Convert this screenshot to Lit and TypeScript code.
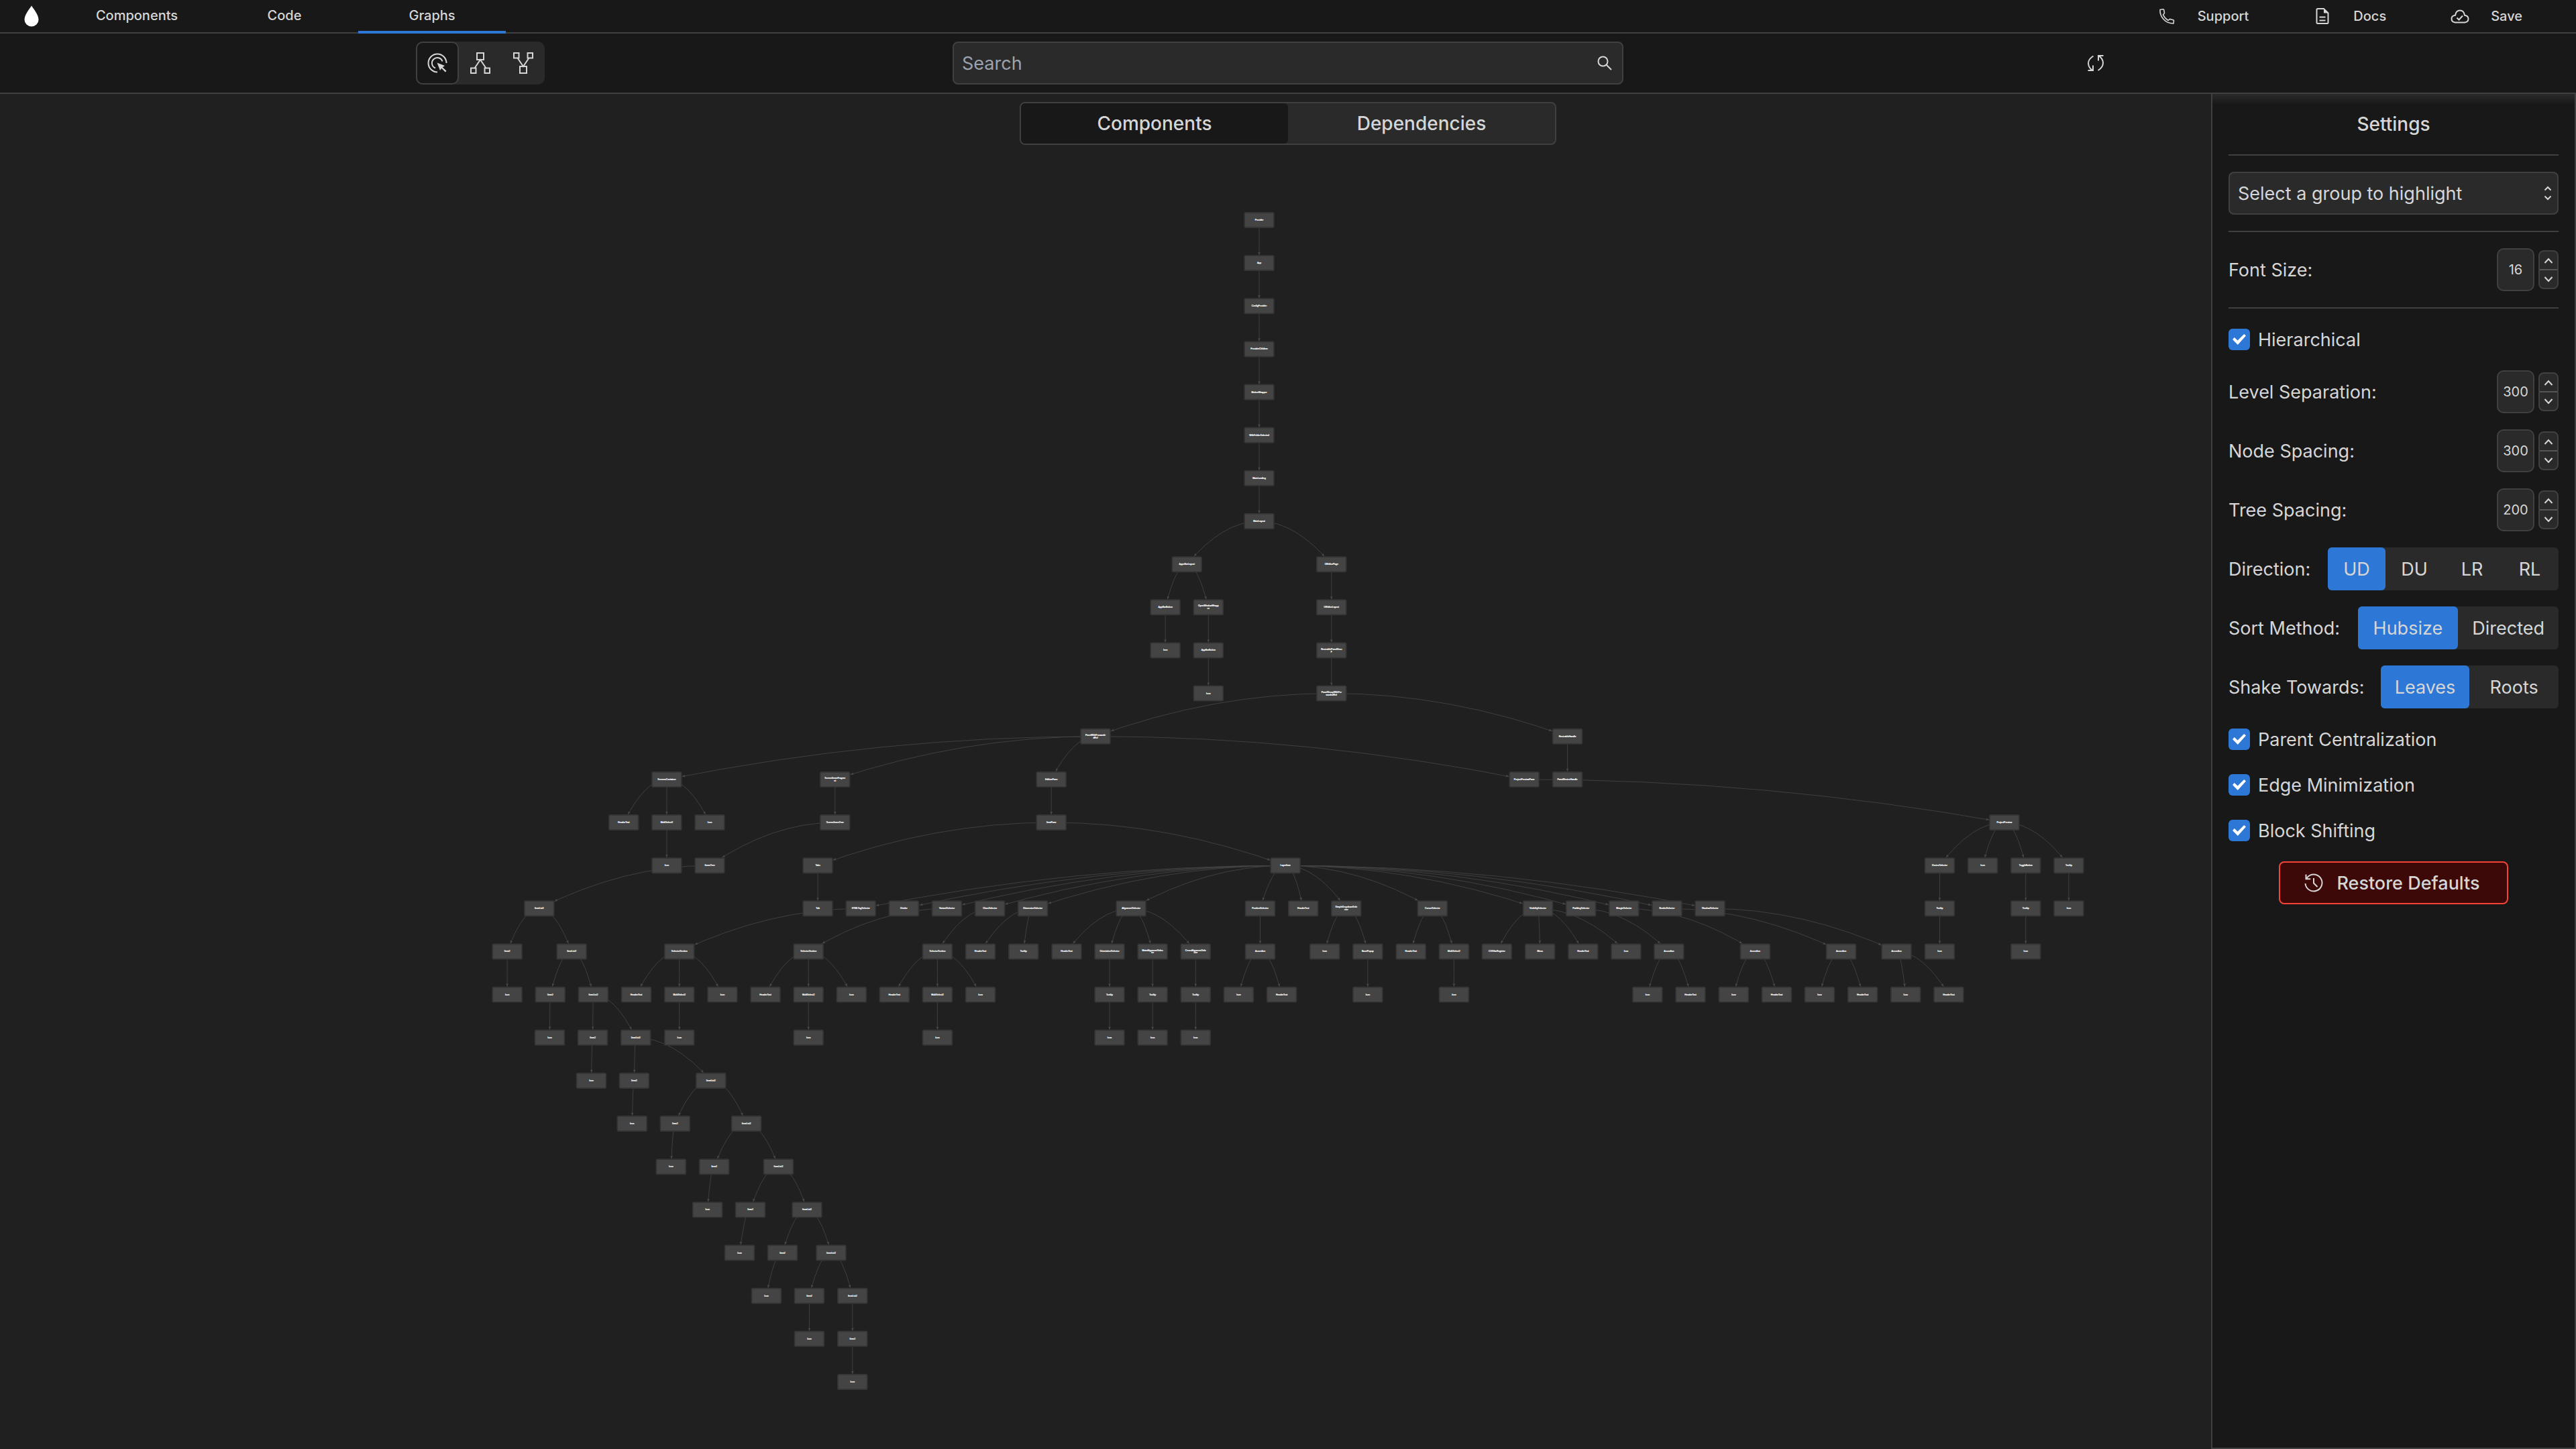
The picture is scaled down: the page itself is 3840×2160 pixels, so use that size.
import { LitElement, html, svg, css } from "lit";
import { customElement, property, state } from "lit/decorators.js";
import { classMap } from "lit/directives/class-map.js";

/* ---------- graph data ---------- */

interface Leaf {
  label: string;
  x: number;
  kids: Leaf[];
}

const n = (label: string, x: number, ...kids: Leaf[]): Leaf => ({ label, x, kids });
const icon = (x: number) => n("Icon", x);
const header = (x: number) => n("HeaderText", x);
const accordion = (x: number, first: number) => n("Accordion", x, icon(first), header(first + 300));
const multi = (x: number) => n("MultiSelect2", x, icon(x));
const section = (x: number) => n("SelectorSection", x, header(x - 300), multi(x), icon(x + 300));
const item = (x: number, child: number) => n("Item2", x, icon(child));
const list = (x: number, ...kids: Leaf[]) => n("ItemList2", x, ...kids);

const itemLists = list(-5019,
  item(-5242, -5242),
  list(-4793,
    item(-4942, -4946),
    list(-4642,
      item(-4646, -4656),
      list(-4346,
        item(-4357, -4372),
        list(-3822,
          item(-4072, -4100),
          list(-3575,
            item(-3799, -3846),
            list(-3351,
              item(-3547, -3622),
              list(-3152,
                item(-3323, -3435),
                list(-2984,
                  item(-3136, -3136),
                  list(-2835, item(-2835, -2835)))))))))));

const layerItem = n("LayerItem", 183,
  n("HTMLTagSelector", -2777, section(-4042)),
  n("Divider", -2477),
  n("VariantSelector", -2177, section(-3142)),
  n("ClassSelector", -1877, section(-2243)),
  n("DimensionSelector", -1578, header(-1943), n("Tooltip", -1643)),
  n("AlignmentSelector", -893,
    header(-1342),
    n("OrientationSelector", -1043, n("Tooltip", -1043, icon(-1043))),
    n("MainAlignmentSelec|tor", -743, n("Tooltip", -743, icon(-743))),
    n("CrossAlignmentSele|ctor", -443, n("Tooltip", -443, icon(-443)))),
  n("PositionSelector", 7, accordion(7, -143)),
  header(307),
  n("SimpleDropdownSele|ctor", 607, icon(457), n("BasePopup", 757, icon(757))),
  n("CursorSelector", 1208, header(1058), multi(1358)),
  n("VisibilitySelector", 1943, n("CSSVarRegister", 1657), n("Menu", 1958), header(2258), icon(2558)),
  n("PaddingSelector", 2243, accordion(2857, 2707)),
  n("MarginSelector", 2543, accordion(3458, 3308)),
  n("BorderSelector", 2843, accordion(4057, 3907)),
  n("ShadowSelector", 3143, accordion(4443, 4507)));

const panel = n("PanelWithForwarde|dRef", -1141,
  n("ScreensContainer", -4130, header(-4430), multi(-4130), icon(-3830)),
  n("ScreenItemsFragme|nt", -2957, n("ScreenItemsTree", -2957, n("ItemsTree", -3830, itemLists))),
  n("EditionPane", -1449, n("ItemPane", -1449, n("Tabs", -3077, n("Tab", -3077)), layerItem)),
  n("ProjectPreviewPane", 1848,
    n("ProjectPreview", 5195,
      n("DeviceSelector", 4744, n("Tooltip", 4744, icon(4744))),
      icon(5044),
      n("ToggleButton", 5344, n("Tooltip", 5344, icon(5344))),
      n("Tooltip", 5644, icon(5644)))));

const layout = n("MainLayout", 0,
  n("AppsBarLayout", -504,
    n("AppBarButton", -654, icon(-654)),
    n("OpenWindowWrapp|er", -354, n("AppBarButton", -354, icon(-354)))),
  n("UIEditorPage", 504,
    n("UIEditorLayout", 504,
      n("ResizablePanelGrou|p", 504,
        n("PanelGroupWithFor|wardedRef", 504,
          panel,
          n("ResizableHandle", 2149, n("PanelResizeHandle", 2149)))))));

const root = ["MainLanding", "WithFolderSelected", "MotionWrapper", "ProviderChildren", "ConfigProvider", "App", "Provider"]
  .reduce((child, label) => n(label, 0, child), layout);

const LEVEL = 300;
const BOX_W = 205;
const BOX_H = 104;

interface Pt { x: number; y: number }
interface Edge { line: string; head: string }
interface Box { x: number; y: number; lines: string[] }

function makeEdge(a: Pt, b: Pt): Edge {
  const v = { x: (a.x + b.x) / 2, y: a.x === b.x ? (a.y + b.y) / 2 : a.y };
  const at = (t: number): Pt => ({
    x: (1 - t) ** 2 * a.x + 2 * t * (1 - t) * v.x + t * t * b.x,
    y: (1 - t) ** 2 * a.y + 2 * t * (1 - t) * v.y + t * t * b.y,
  });
  const halfW = BOX_W / 2 + 4;
  const halfH = BOX_H / 2 + 4;
  let t = 1;
  let tip = b;
  while (t > 0 && Math.abs(tip.x - b.x) < halfW && Math.abs(tip.y - b.y) < halfH) {
    t -= 0.002;
    tip = at(t);
  }
  const back = at(Math.max(0, t - 0.03));
  const len = Math.hypot(tip.x - back.x, tip.y - back.y) || 1;
  const ux = (tip.x - back.x) / len;
  const uy = (tip.y - back.y) / len;
  const L = 20;
  const W = 9;
  const p = (f: number, s: number) => `${(tip.x - ux * f - uy * s).toFixed(1)},${(tip.y - uy * f + ux * s).toFixed(1)}`;
  return {
    line: `M${a.x} ${a.y} Q${v.x} ${v.y} ${b.x} ${b.y}`,
    head: `${p(0, 0)} ${p(L, W)} ${p(L * 0.85, 0)} ${p(L, -W)}`,
  };
}

const boxes: Box[] = [];
const edges: Edge[] = [];
(function walk(node: Leaf, depth: number) {
  const here = { x: node.x, y: depth * LEVEL };
  boxes.push({ ...here, lines: node.label.split("|") });
  for (const kid of node.kids) {
    edges.push(makeEdge(here, { x: kid.x, y: (depth + 1) * LEVEL }));
    walk(kid, depth + 1);
  }
})(root, 0);

@customElement("component-graph")
export class ComponentGraph extends LitElement {
  static styles = css`
    :host { display: block; min-width: 0; min-height: 0; }
    .canvas { display: block; width: 100%; height: 100%; }
    .edge { fill: none; stroke: #444; stroke-width: 4; }
    .head { fill: #4a4a4a; }
    .box { fill: #444; stroke: #343434; stroke-width: 8; }
    .name {
      fill: #fff;
      stroke: #fff;
      stroke-width: 1;
      font: 16px "Liberation Sans", Arial, sans-serif;
      text-anchor: middle;
      dominant-baseline: central;
    }
  `;

  render() {
    return html`
      <svg class="canvas" viewBox="-8778 -879 17958 9447" preserveAspectRatio="xMidYMin meet" role="img" aria-label="Component graph">
        ${edges.map((e) => svg`<path class="edge" d=${e.line}></path><polygon class="head" points=${e.head}></polygon>`)}
        ${boxes.map((b) => svg`
          <rect class="box" x=${b.x - BOX_W / 2} y=${b.y - BOX_H / 2} width=${BOX_W} height=${BOX_H} rx="8"></rect>
          ${b.lines.map((line, i) => svg`<text class="name" x=${b.x} y=${b.y + (i - (b.lines.length - 1) / 2) * 18}>${line}</text>`)}
        `)}
      </svg>`;
  }
}

/* ---------- shared look ---------- */

const base = css`
  :host {
    font-family: Inter, "Liberation Sans", sans-serif;
    color: #d6d6d6;
  }
  * { box-sizing: border-box; }
  button, input, select {
    margin: 0;
    padding: 0;
    border: 0;
    background: none;
    color: inherit;
    font: inherit;
    outline: none;
  }
  svg { display: block; fill: none; stroke: currentColor; stroke-width: 2; }
`;

/* ---------- settings ---------- */

@customElement("number-field")
export class NumberField extends LitElement {
  @property() label = "";
  @property({ type: Number }) value = 0;

  static styles = [base, css`
    :host { display: flex; align-items: center; justify-content: space-between; height: 64px; }
    .name { font-size: 27px; }
    .pair { display: flex; align-items: center; gap: 6px; }
    .value {
      width: 56px;
      height: 64px;
      border: 2px solid #404040;
      border-radius: 10px;
      background: #2a2a2a;
      text-align: center;
      font-size: 20px;
      appearance: textfield;
    }
    .value::-webkit-inner-spin-button { appearance: none; margin: 0; }
    .stepper {
      display: flex;
      flex-direction: column;
      width: 30px;
      height: 58px;
      border: 2px solid #404040;
      border-radius: 8px;
      background: #2a2a2a;
    }
    .step { flex: 1; display: grid; place-items: center; }
    .step + .step { border-top: 2px solid #555; }
  `];

  render() {
    return html`
      <label class="name" for="value">${this.label}:</label>
      <div class="pair">
        <input class="value" id="value" type="number" .value=${String(this.value)} />
        <div class="stepper">
          <button class="step" aria-label="Increase" @click=${() => this.value++}>
            <svg width="14" height="9" viewBox="0 0 14 9"><path d="M1.5 8 7 2 12.5 8" /></svg>
          </button>
          <button class="step" aria-label="Decrease" @click=${() => this.value--}>
            <svg width="14" height="9" viewBox="0 0 14 9"><path d="M1.5 1 7 7 12.5 1" /></svg>
          </button>
        </div>
      </div>`;
  }
}

@customElement("choice-field")
export class ChoiceField extends LitElement {
  @property() label = "";
  @property({ type: Array }) options: string[] = [];
  @state() private picked = 0;

  static styles = [base, css`
    :host { display: flex; align-items: center; justify-content: space-between; height: 64px; font-size: 27px; }
    .group { display: grid; grid-auto-flow: column; grid-auto-columns: 1fr; height: 64px; border-radius: 6px; background: #2a2a2a; }
    .option { min-width: 86px; padding: 0 21px; border-radius: 6px; }
    .on { background: #2d78d6; }
  `];

  render() {
    return html`
      <span id="name">${this.label}:</span>
      <div class="group" role="group" aria-labelledby="name">
        ${this.options.map((o, i) => html`
          <button class=${classMap({ option: true, on: i === this.picked })} aria-pressed=${i === this.picked}
            @click=${() => (this.picked = i)}>${o}</button>`)}
      </div>`;
  }
}

@customElement("check-field")
export class CheckField extends LitElement {
  @property() label = "";

  static styles = [base, css`
    :host { display: flex; align-items: center; height: 44px; font-size: 27px; }
    .line { display: flex; align-items: center; gap: 12px; }
    .box { appearance: none; display: grid; place-items: center; width: 32px; height: 32px; border-radius: 6px; background: #2a2a2a; }
    .box:checked { background: #2d78d6; }
    .box:checked::before {
      content: "";
      width: 20px;
      height: 16px;
      background: #fff;
      clip-path: polygon(0 50%, 14% 32%, 38% 60%, 86% 0, 100% 16%, 39% 100%);
    }
  `];

  render() {
    return html`<label class="line"><input class="box" type="checkbox" checked />${this.label}</label>`;
  }
}

@customElement("settings-panel")
export class SettingsPanel extends LitElement {
  static styles = [base, css`
    :host {
      display: flex;
      flex-direction: column;
      gap: 24px;
      width: 544px;
      padding: 24px;
      border: solid #404040;
      border-width: 0 2px 2px;
      background: linear-gradient(#2a2a2a, #181818 16px);
    }
    .title { margin: 0; text-align: center; font-size: 28px; font-weight: 500; line-height: 42px; }
    .rule { width: 100%; height: 2px; margin: 0; border: 0; background: #404040; }
    .picker { display: grid; align-items: center; height: 64px; }
    .picker > * { grid-area: 1 / 1; }
    .select {
      appearance: none;
      width: 100%;
      height: 64px;
      padding: 0 12px;
      border: 2px solid #404040;
      border-radius: 8px;
      background: #2a2a2a;
      font-size: 27px;
    }
    .arrows { justify-self: end; margin-right: 10px; pointer-events: none; }
    .restore {
      display: flex;
      align-items: center;
      align-self: center;
      gap: 20px;
      height: 64px;
      padding: 0 40px 0 36px;
      border: 2px solid #f44336;
      border-radius: 8px;
      background: #3c0808;
      font-size: 27px;
      font-weight: 500;
    }
  `];

  render() {
    return html`
      <h2 class="title">Settings</h2>
      <hr class="rule" />
      <div class="picker">
        <select class="select" aria-label="Group to highlight"><option>Select a group to highlight</option></select>
        <svg class="arrows" width="12" height="22" viewBox="0 0 12 22"><path d="M1.5 6.5 6 2l4.5 4.5M1.5 15.5 6 20l4.5-4.5" /></svg>
      </div>
      <hr class="rule" />
      <number-field label="Font Size" .value=${16}></number-field>
      <hr class="rule" />
      <check-field label="Hierarchical"></check-field>
      <number-field label="Level Separation" .value=${300}></number-field>
      <number-field label="Node Spacing" .value=${300}></number-field>
      <number-field label="Tree Spacing" .value=${200}></number-field>
      <choice-field label="Direction" .options=${["UD", "DU", "LR", "RL"]}></choice-field>
      <choice-field label="Sort Method" .options=${["Hubsize", "Directed"]}></choice-field>
      <choice-field label="Shake Towards" .options=${["Leaves", "Roots"]}></choice-field>
      <check-field label="Parent Centralization"></check-field>
      <check-field label="Edge Minimization"></check-field>
      <check-field label="Block Shifting"></check-field>
      <button class="restore">
        <svg width="28" height="28" viewBox="0 0 28 28">
          <path d="M1.5 15A12.5 12.5 0 1 0 4.5 5.8L2.5 8M2.5 1.5V8.2H9.2" />
          <path d="M14 7v7.5l5.5 5.5" />
        </svg>
        Restore Defaults
      </button>`;
  }
}

/* ---------- page ---------- */

@customElement("app-root")
export class AppRoot extends LitElement {
  @state() private view = "Components";

  static styles = [base, css`
    :host { display: flex; flex-direction: column; min-height: 100vh; background: #202020; }
    .top { display: flex; align-items: stretch; height: 50px; border-bottom: 2px solid #404040; background: #181818; }
    .logo { display: grid; place-items: center; width: 94px; }
    .drop { fill: #fff; stroke: none; }
    .tabs { display: flex; flex: 1; margin-bottom: -2px; }
    .tab {
      width: 220px;
      border-bottom: 4px solid transparent;
      font-size: 20px;
      font-weight: 500;
    }
    .current { border-bottom-color: #2d78d6; }
    .links { display: flex; gap: 96px; padding-right: 80px; }
    .link { display: flex; align-items: center; gap: 32px; color: inherit; text-decoration: none; font-size: 20px; font-weight: 500; }

    .bar {
      display: grid;
      grid-template-columns: 1fr 1000px 1fr;
      align-items: center;
      justify-items: center;
      height: 90px;
      padding: 0 12px;
      border-bottom: 2px solid #404040;
      background: #181818;
    }
    .modes { display: flex; border-radius: 10px; background: #2a2a2a; }
    .mode { display: grid; place-items: center; width: 64px; height: 64px; border: 2px solid transparent; border-radius: 10px; }
    .active { border-color: #404040; background: #181818; }
    .search {
      display: flex;
      align-items: center;
      width: 100%;
      height: 64px;
      padding: 0 15px 0 12px;
      border: 2px solid #404040;
      border-radius: 8px;
      background: #2a2a2a;
    }
    .query { flex: 1; font-size: 27px; }
    .query::placeholder { color: #9ca3af; }
    .solid { fill: currentColor; stroke: none; }

    .stage { flex: 1; display: grid; grid-template: minmax(0, 1fr) / minmax(0, 1fr); }
    .stage > * { grid-area: 1 / 1; }
    .switch {
      display: grid;
      grid-template-columns: 1fr 1fr;
      place-self: start center;
      width: 800px;
      height: 64px;
      margin-top: 12px;
      border: 2px solid #404040;
      border-radius: 8px;
      background: #2a2a2a;
    }
    .side { border-radius: 6px; font-size: 28px; font-weight: 500; }
    .chosen { background: #181818; }
    .settings { justify-self: end; }
  `];

  render() {
    return html`
      <header class="top">
        <div class="logo">
          <svg class="drop" width="22" height="32" viewBox="0 0 22 32"><path d="M11 .5C14.5 6 21.5 14 21.5 21.5A10.5 10 0 0 1 .5 21.5C.5 14 7.5 6 11 .5Z" /></svg>
        </div>
        <nav class="tabs">
          ${["Components", "Code", "Graphs"].map((t) => html`
            <button class=${classMap({ tab: true, current: t === "Graphs" })}>${t}</button>`)}
        </nav>
        <div class="links">
          <a class="link" href="#support">
            <svg width="28" height="28" viewBox="0 0 28 28"><path d="M4 4.5 8.5 3.8Q9.5 3.8 9.8 4.8L10.5 9.5 8.5 12Q11 17.5 16 20.5L18.5 18.5 23.5 19.8Q24.6 20.2 24.5 21.2L24 25Q14.5 25 9 18.5 3.5 12.5 4 4.5Z" stroke-width="1.6" /></svg>
            Support
          </a>
          <a class="link" href="#docs">
            <svg width="28" height="28" viewBox="0 0 28 28"><path d="M16 3H7Q5.5 3 5.5 4.5V23.5Q5.5 25 7 25H21Q22.5 25 22.5 23.5V9.5Z" /><path class="solid" d="M16 3 22.5 9.5H16Z" /><path d="M9.5 15.5h9M9.5 20.5h9" /></svg>
            Docs
          </a>
          <a class="link" href="#save">
            <svg width="28" height="28" viewBox="0 0 28 28"><path d="M7 23.5Q1.500 23 1.500 18 1.500 13.500 7 12.800 8.200 5.500 14 5.500 19.800 5.500 21 12.800 26.500 13.800 26.500 18 26.500 23 21 23.500Z" /><path d="M9.500 16.500 12.500 19.500 18 13.500" /></svg>
            Save
          </a>
        </div>
      </header>

      <div class="bar">
        <div class="modes">
          <button class="mode active" aria-label="Select">
            <svg width="32" height="32" viewBox="0 0 32 32">
              <path d="M29.5 16A13.5 13.5 0 1 0 16 29.5" />
              <path d="M23.5 13.5A8 8 0 1 0 13 23.5" />
              <path class="solid" d="M15.5 15.5 27 20 23.800 22.200 29.500 27.800 27.800 29.500 22.200 23.800 20 27Z" />
            </svg>
          </button>
          <button class="mode" aria-label="Show children">
            <svg width="30" height="32" viewBox="0 0 30 32"><path d="M10 1h10v10H10ZM1 23.5h7.5V31H1ZM21.5 23.5H29V31h-7.500ZM6.500 23.500 15 11 23.500 23.500" /></svg>
          </button>
          <button class="mode" aria-label="Show parents">
            <svg width="30" height="32" viewBox="0 0 30 32"><path d="M10 21h10v10H10ZM1 1h7.500V8.500H1ZM21.500 1H29V8.500h-7.500ZM6.500 8.500 15 21 23.500 8.500" /></svg>
          </button>
        </div>
        <div class="search">
          <input class="query" type="search" placeholder="Search" aria-label="Search" />
          <button aria-label="Run search">
            <svg width="22" height="22" viewBox="0 0 22 22"><circle cx="8.5" cy="8.5" r="7" /><path d="M13.5 13.5 21 21" /></svg>
          </button>
        </div>
        <button aria-label="Refresh">
          <svg width="26" height="26" viewBox="0 0 26 26">
            <path d="M9.5 2.5Q2 7 2 13.5 2.5 20.5 8.5 24M9 16.5V24H1.5" />
            <path d="M16.5 24Q24 19.5 24 12.5 23.5 6 17.5 2.2M17 9.5V2H24.5" />
          </svg>
        </button>
      </div>

      <main class="stage">
        <component-graph></component-graph>
        <div class="switch" role="group" aria-label="Graph">
          ${["Components", "Dependencies"].map((v) => html`
            <button class=${classMap({ side: true, chosen: v === this.view })} aria-pressed=${v === this.view}
              @click=${() => (this.view = v)}>${v}</button>`)}
        </div>
        <settings-panel class="settings"></settings-panel>
      </main>`;
  }
}
